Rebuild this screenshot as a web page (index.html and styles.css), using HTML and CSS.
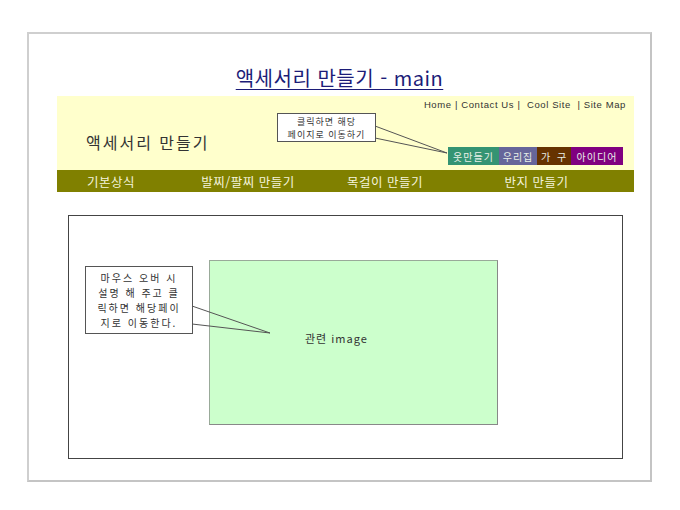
FILE: index.html
```html
<!DOCTYPE html>
<html lang="ko">
<head>
    <meta charset="UTF-8">
    <meta name="viewport" content="width=device-width, initial-scale=1.0">
    <title>액세서리 만들기 - main</title>
    <link rel="stylesheet" href="styles.css">
</head>
<body>
    <div class="frame">
        <h1 class="title">액세서리 만들기 - main</h1>

        <div class="header">
            <div class="top-links">Home | Contact Us |&nbsp; Cool Site &nbsp;| Site Map</div>
            <div class="header-row">
                <div class="logo">액세서리 만들기</div>
                <div class="menu">
                    <a class="menu-item clothes">옷만들기</a>
                    <a class="menu-item house">우리집</a>
                    <a class="menu-item furniture">가 구</a>
                    <a class="menu-item idea">아이디어</a>
                </div>
            </div>
        </div>

        <div class="nav">
            <a>기본상식</a>
            <a>발찌/팔찌 만들기</a>
            <a>목걸이 만들기</a>
            <a>반지 만들기</a>
        </div>

        <div class="content">
            <div class="image-box">관련 image</div>
        </div>

        <div class="callout callout-menu">
            클릭하면 해당<br>페이지로 이동하기
            <svg class="tail" width="80" height="50" viewBox="0 0 80 50">
                <polyline points="0,13 72,40 0,25" fill="none" stroke="#555" stroke-width="1"/>
            </svg>
        </div>

        <div class="callout callout-hover">
            마우스 오버 시<br>설명 해 주고 클<br>릭하면 해당페이<br>지로 이동한다.
            <svg class="tail" width="90" height="80" viewBox="0 0 90 80">
                <polyline points="0,40 78,67 0,58" fill="none" stroke="#555" stroke-width="1"/>
            </svg>
        </div>
    </div>
</body>
</html>
```

FILE: styles.css
```css
* {
    margin: 0;
    padding: 0;
    box-sizing: border-box;
    font-family: "Noto Sans CJK KR", "Noto Sans", sans-serif;
}

body {
    background: #fff;
}

.frame {
    position: relative;
    width: 625px;
    height: 450px;
    margin: 32px 0 0 27px;
    border: 2px solid #cfcfcf;
    border-right-color: #c4c4c4;
    border-bottom-color: #c4c4c4;
}

.title {
    margin-top: 32px;
    text-align: center;
    font-size: 20px;
    line-height: 24px;
    font-weight: normal;
    letter-spacing: 0.5px;
    color: #1c1c78;
    text-decoration: underline;
    text-underline-offset: 3px;
    text-decoration-thickness: 1px;
}

.header {
    display: flex;
    flex-direction: column;
    width: 577px;
    height: 74px;
    margin: 6px 0 0 28px;
    padding: 3px 11px 5px 29px;
    background: #ffffcc;
}

.top-links {
    margin-right: -3px;
    text-align: right;
    font-family: "Liberation Sans", sans-serif;
    font-size: 9.5px;
    line-height: 12px;
    letter-spacing: 0.6px;
    color: #333;
}

.header-row {
    flex: 1;
    display: flex;
    justify-content: space-between;
    align-items: flex-end;
}

.logo {
    margin-bottom: 13px;
    font-size: 16px;
    line-height: 20px;
    letter-spacing: 2px;
    color: #333;
}

.menu {
    display: flex;
    height: 18px;
}

.menu-item {
    display: flex;
    align-items: center;
    justify-content: center;
    font-size: 10px;
    letter-spacing: 1px;
    color: #e8f0e8;
}

.clothes { width: 51px; background: #349473; }
.house { width: 38px; background: #66669a; }
.furniture { width: 34px; background: #663300; word-spacing: 2px; }
.idea { width: 52px; background: #800080; }

.nav {
    display: grid;
    grid-template-columns: 108px 166px 108px 1fr;
    align-items: center;
    width: 577px;
    height: 22px;
    margin-left: 28px;
    background: #808000;
}

.nav a {
    text-align: center;
    font-size: 12.5px;
    letter-spacing: 0.5px;
    color: #f4f4dc;
}

.content {
    width: 555px;
    height: 244px;
    margin: 23px 0 0 39px;
    padding: 44px 0 0 140px;
    border: 1px solid #444;
}

.image-box {
    width: 289px;
    height: 165px;
    padding: 70px 0 0 95px;
    background: #ccffcc;
    border: 1px solid #99aa99;
    border-right-color: #888;
    border-bottom-color: #888;
    font-size: 11px;
    line-height: 15px;
    letter-spacing: 1px;
    color: #333;
}

.callout {
    position: absolute;
    background: #fff;
    border: 1px solid #555;
    text-align: center;
    color: #333;
    letter-spacing: 1px;
}

.callout .tail {
    position: absolute;
    top: -1px;
    left: 100%;
    overflow: visible;
}

.callout-menu {
    left: 248px;
    top: 79px;
    width: 99px;
    height: 29px;
    padding-top: 1px;
    font-size: 9px;
    line-height: 13px;
}

.callout-hover {
    left: 56px;
    top: 232px;
    width: 108px;
    height: 68px;
    padding-top: 3px;
    font-size: 10px;
    line-height: 15px;
    letter-spacing: 2px;
}
```
